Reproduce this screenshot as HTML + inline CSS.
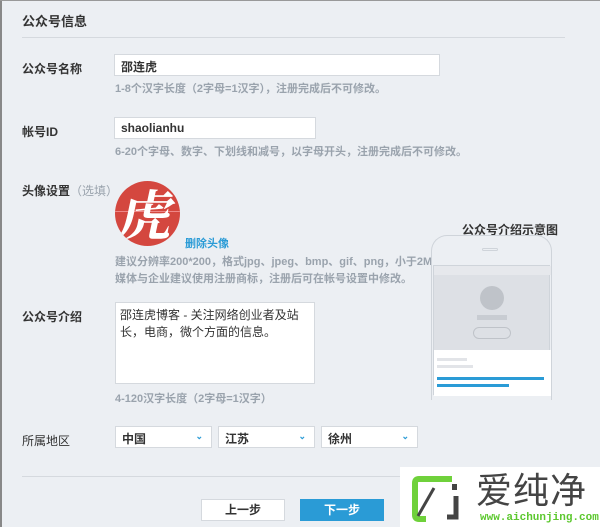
<!DOCTYPE html>
<html><head><meta charset="utf-8"><style>
*{margin:0;padding:0;box-sizing:border-box}
body{width:600px;height:527px;overflow:hidden;background:#eceff3;font-family:"Liberation Sans","Noto Sans CJK SC",sans-serif;font-size:12px;color:#333;position:relative}
.a{position:absolute;white-space:nowrap}
.lab{font-size:12px;color:#333;font-weight:bold}
.hint{color:#9aa3ad;font-size:11px;font-weight:bold}
.inp{position:absolute;background:#fff;border:1px solid #d5d9de;font-size:12px;color:#333;padding-left:6px;font-weight:bold}
.sel{position:absolute;background:#fff;border:1px solid #d5d9de;height:22px;top:426px;font-size:12px;padding:3px 0 0 6px;font-weight:bold}
.sel i{position:absolute;right:8px;top:4px;color:#2a9bd6;font-style:normal;font-size:9px}
</style></head><body>
<div style="position:absolute;left:0;top:0;width:2px;height:527px;background:#888"></div>
<div style="position:absolute;left:0;top:0;width:600px;height:1px;background:#999"></div>
<div class="a lab" style="left:22px;top:11px;font-size:13px">公众号信息</div>
<div style="position:absolute;left:22px;top:37px;width:543px;height:1px;background:#d5d9de"></div>

<div class="a lab" style="left:22px;top:60px">公众号名称</div>
<div class="inp" style="left:114px;top:54px;width:326px;height:22px;padding-top:3px">邵连虎</div>
<div class="a hint" style="left:115px;top:80px">1-8个汉字长度（2字母=1汉字），注册完成后不可修改。</div>

<div class="a lab" style="left:22px;top:123px">帐号ID</div>
<div class="inp" style="left:114px;top:117px;width:202px;height:22px;padding-top:3px">shaolianhu</div>
<div class="a hint" style="left:115px;top:143px">6-20个字母、数字、下划线和减号，以字母开头，注册完成后不可修改。</div>

<div class="a lab" style="left:22px;top:182px">头像设置<span style="color:#9aa3ad;font-weight:normal">（选填）</span></div>
<div style="position:absolute;left:115px;top:181px;width:65px;height:65px;border-radius:50%;background:#d4473f;overflow:hidden">
<div style="position:absolute;left:0;top:30px;width:65px;height:1px;background:#e88"></div>
<div class="a" style="left:6px;top:2px;font-size:54px;line-height:60px;color:#fff;font-family:'Noto Serif CJK SC',serif;font-weight:bold;transform:skewX(-12deg)">虎</div></div>
<div class="a" style="left:185px;top:235px;color:#2a9bd6;font-weight:bold;font-size:11px">删除头像</div>
<div class="a hint" style="left:115px;top:253px">建议分辨率200*200，格式jpg、jpeg、bmp、gif、png，小于2M</div>
<div class="a hint" style="left:115px;top:270px">媒体与企业建议使用注册商标，注册后可在帐号设置中修改。</div>

<div class="a lab" style="left:462px;top:221px">公众号介绍示意图</div>
<div style="position:absolute;left:431px;top:235px;width:121px;height:165px;border:1px solid #cfd4da;border-bottom:none;border-radius:16px 16px 0 0"></div>
<div style="position:absolute;left:433px;top:265px;width:117px;height:130px;background:#dde0e5;border:1px solid #cfd4da">
<div style="position:absolute;left:0;top:0;width:117px;height:9px;background:#e6e8ec"></div>
<div style="position:absolute;left:46px;top:20px;width:24px;height:24px;border-radius:50%;background:#bfc3c9"></div>
<div style="position:absolute;left:43px;top:49px;width:30px;height:5px;background:#c8ccd2"></div>
<div style="position:absolute;left:39px;top:61px;width:38px;height:12px;border:1px solid #bfc3c9;border-radius:7px"></div>
<div style="position:absolute;left:0;top:84px;width:117px;height:46px;background:#fff">
<div style="position:absolute;left:3px;top:8px;width:30px;height:3px;background:#e2e4e8"></div>
<div style="position:absolute;left:3px;top:15px;width:36px;height:3px;background:#e2e4e8"></div>
<div style="position:absolute;left:3px;top:27px;width:107px;height:3px;background:#2a9bd6"></div>
<div style="position:absolute;left:3px;top:34px;width:72px;height:3px;background:#2a9bd6"></div>
</div></div>
<div style="position:absolute;left:482px;top:248px;width:16px;height:3px;border:1px solid #cfd4da;border-radius:2px"></div>

<div class="a lab" style="left:22px;top:308px">公众号介绍</div>
<div class="inp" style="left:115px;top:302px;width:200px;height:82px;padding:4px 4px;line-height:17px;white-space:normal;font-weight:normal">邵连虎博客 - 关注网络创业者及站长，电商，微个方面的信息。</div>
<div class="a hint" style="left:115px;top:390px">4-120汉字长度（2字母=1汉字）</div>

<div class="a lab" style="left:22px;top:432px;font-weight:normal">所属地区</div>
<div class="sel" style="left:115px;width:97px">中国<i>⌄</i></div>
<div class="sel" style="left:218px;width:97px">江苏<i>⌄</i></div>
<div class="sel" style="left:321px;width:97px">徐州<i>⌄</i></div>

<div style="position:absolute;left:22px;top:476px;width:380px;height:1px;background:#d5d9de"></div>
<div class="a" style="left:201px;top:499px;width:84px;height:22px;background:#fff;border:1px solid #d5d9de;text-align:center;line-height:20px;font-weight:bold">上一步</div>
<div class="a" style="left:300px;top:499px;width:84px;height:22px;background:#2a9bd6;color:#fff;text-align:center;line-height:22px;font-weight:bold">下一步</div>

<div style="position:absolute;left:400px;top:467px;width:200px;height:60px;background:#fff">
<svg style="position:absolute;left:12px;top:9px" width="50" height="46" viewBox="0 0 50 46">
<path d="M40 3H7Q3 3 3 7V39Q3 43 7 43H14" fill="none" stroke="#6fd13b" stroke-width="6"/>
<path d="M6 40L22 12" stroke="#444" stroke-width="3"/>
<path d="M44 20V41H35" fill="none" stroke="#444" stroke-width="5"/>
<rect x="40" y="8" width="5" height="6" fill="#444"/>
</svg>
<div class="a" style="left:76px;top:4px;font-size:36px;line-height:40px;color:#444;letter-spacing:1px">爱纯净</div>
<div class="a" style="left:80px;top:45px;font-size:11px;color:#5cc82e;font-family:'Liberation Mono',monospace;font-weight:bold">www.aichunjing.com</div>
</div>
</body></html>
